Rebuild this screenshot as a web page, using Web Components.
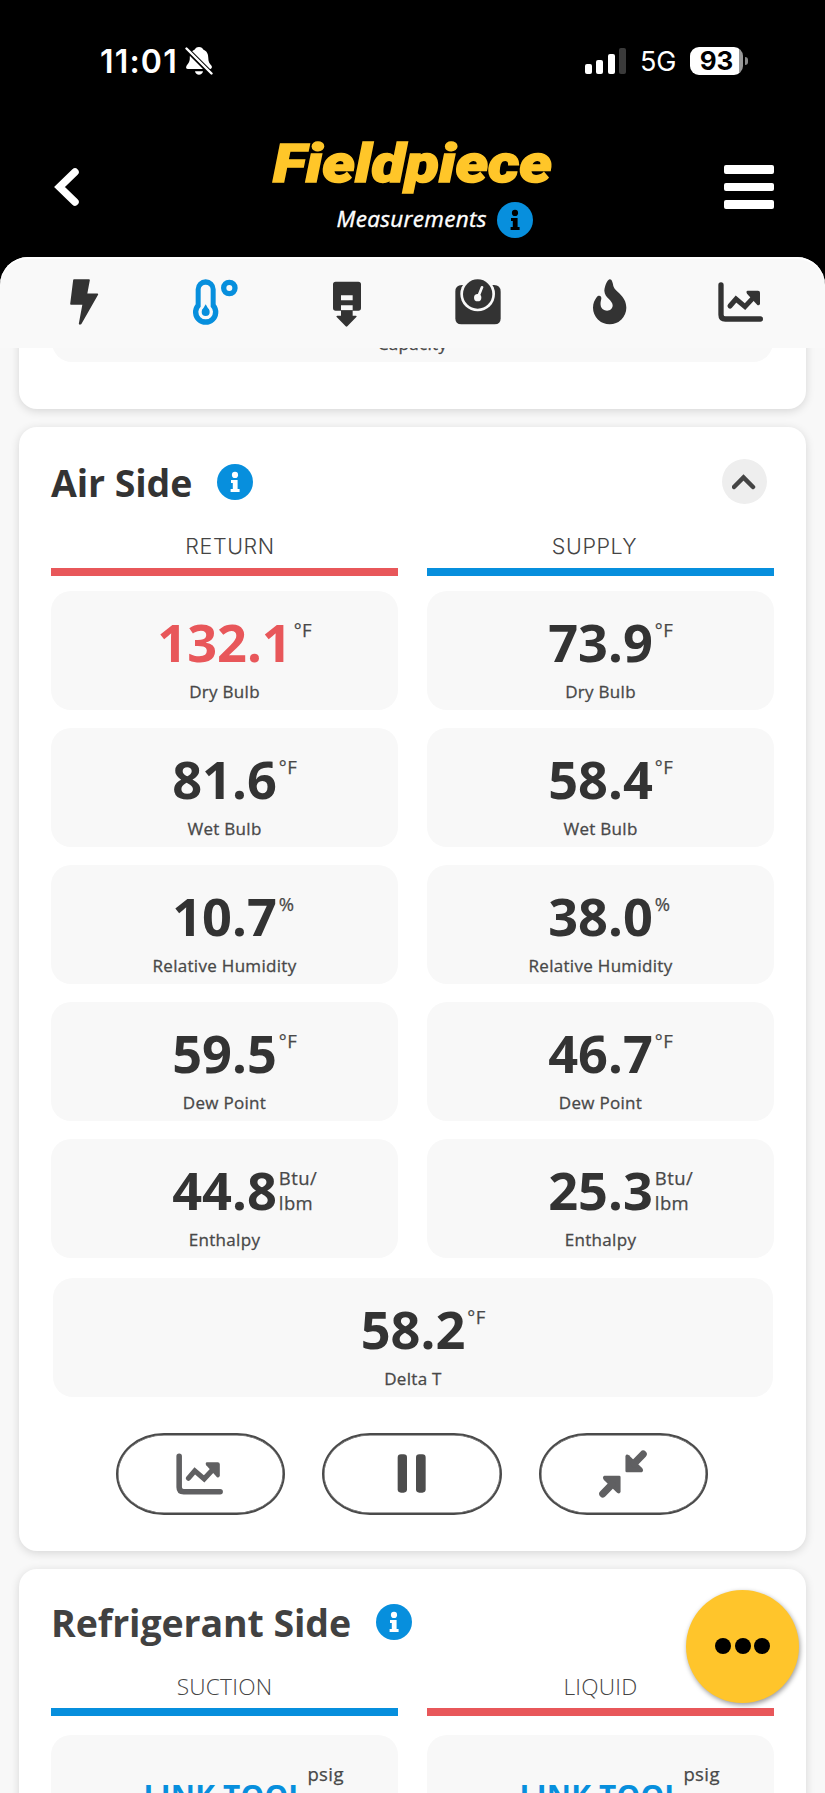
<!DOCTYPE html>
<html lang="en">
<head>
<meta charset="utf-8">
<meta name="viewport" content="width=device-width, initial-scale=1">
<title>Measurements</title>
<style>
  html, body { margin: 0; height: 100%; }
  body {
    background: #f8f8f8;
    font-family: "Open Sans", "Noto Sans", sans-serif;
    color: #333;
    overflow: hidden;
  }
</style>
</head>
<body>
<measure-app></measure-app>

<script>
  const ICONS = {
    bolt: '<path d="M42 6H87L79 49H112L62 137H59L70 78H33Z" stroke="currentColor" stroke-width="5" stroke-linejoin="round"/>',
    temp: `<path fill-rule="evenodd" d="M14 34a30 30 0 0 1 60 0V79A38 38 0 1 1 14 79ZM29 34V86A22 22 0 1 0 59 86V34a15 14 0 0 0-30 0Z"/>
      <circle cx="44" cy="102" r="12"/><path d="M34 96L44 79L54 96Z"/>
      <circle cx="115" cy="30" r="17" fill="none" stroke="currentColor" stroke-width="16"/>`,
    probe: `<path fill-rule="evenodd" d="M38 11H106Q114 11 114 19V90Q114 98 106 98H38Q30 98 30 90V19Q30 11 38 11ZM54 52V67H89V52ZM54 82V97H89V82Z"/>
      <path d="M54 97H89V113H99Q103 114 100 117L73 145Q70 147 68 145L41 117Q38 114 43 113H54Z"/>`,
    scale: `<path d="M24 21H120Q140 21 140 41V121Q140 139 122 139H22Q4 139 4 121V41Q4 21 24 21Z"/>
      <circle cx="71" cy="48" r="52" fill="#f9f9f9"/><circle cx="71" cy="48" r="44"/>
      <path d="M84 28L72 58" stroke="#f9f9f9" stroke-width="8" stroke-linecap="round"/><circle cx="71" cy="59" r="11" fill="#f9f9f9"/>`,
    fire: '<path d="M71 4C77 3 80 12 82 24C87 42 121 52 121 89A50 50 0 0 1 21 89C21 76 26 66 32 58C38 50 47 53 46 62C44 70 43 76 44 82C46 103 80 104 80 82C80 66 56 60 55 38C56 24 64 5 71 4Z"/>',
    chart: `<g fill="none" stroke="currentColor" stroke-linecap="round" stroke-linejoin="miter">
      <path stroke-width="16" d="M12 21V110Q12 123 25 123H130"/>
      <path stroke-width="15" d="M39 84L57 63L84 86L112 56"/></g>
      <path d="M92 38H123Q129 38 129 44V77Q127 84 121 81L90 47Q86 39 92 38Z"/>`,
    pause: '<rect x="29" y="13" width="28" height="115" rx="10"/><rect x="84" y="13" width="29" height="115" rx="10"/>',
    compress: `<path d="M79 20Q82 13 89 18L127 55Q133 63 126 67H83Q79 67 79 63Z"/>
      <path d="M104 42L130 15" stroke="currentColor" stroke-width="21" stroke-linecap="round"/>
      <g transform="rotate(180 72 72)"><path d="M79 20Q82 13 89 18L127 55Q133 63 126 67H83Q79 67 79 63Z"/>
      <path d="M104 42L130 15" stroke="currentColor" stroke-width="21" stroke-linecap="round"/></g>`
  };

  class AppIcon extends HTMLElement {
    constructor() {
      super();
      this.attachShadow({ mode: 'open' });
    }

    connectedCallback() {
      this.shadowRoot.innerHTML = `
        <style>
          :host { display: block; width: 48px; height: 48px; }
          svg { display: block; width: 100%; height: 100%; overflow: visible; }
        </style>
        <svg viewBox="0 0 144 144" fill="currentColor">${ICONS[this.getAttribute('name')]}</svg>
      `;
    }
  }
  customElements.define('app-icon', AppIcon);

  class InfoDot extends HTMLElement {
    constructor() {
      super();
      this.attachShadow({ mode: 'open' });
      this.shadowRoot.innerHTML = `
        <style>
          :host { display: block; width: 36px; height: 36px; color: #fff; }
          svg { display: block; }
        </style>
        <svg width="36" height="36" viewBox="0 0 36 36">
          <circle cx="18" cy="18" r="18" fill="#078fdd"/>
          <circle cx="18" cy="10.9" r="3.1" fill="currentColor"/>
          <path d="M14 16h6.6v9h2v2.9h-9V25h2.2v-6H14z" fill="currentColor"/>
        </svg>
      `;
    }
  }
  customElements.define('info-dot', InfoDot);

  class StatusBar extends HTMLElement {
    constructor() {
      super();
      this.attachShadow({ mode: 'open' });
      this.shadowRoot.innerHTML = `
        <style>
          :host {
            display: flex;
            align-items: center;
            justify-content: space-between;
            height: 122px;
            padding: 0 77px 0 100px;
            box-sizing: border-box;
            font-family: Inter, sans-serif;
            color: #fff;
          }
          .group { display: flex; align-items: center; }
          .time { font-size: 32px; font-weight: 600; letter-spacing: 1.2px; }
          .bell { margin-left: 7px; }
          .signal { display: flex; align-items: flex-end; gap: 4.3px; height: 26px; }
          .signal i { width: 7px; border-radius: 2px; background: #fff; }
          .signal i:last-child { background: #3a3a3a; }
          .net { margin-left: 14px; font-size: 27px; font-weight: 400; letter-spacing: -0.3px; }
          .battery {
            margin-left: 14px;
            width: 53px;
            height: 28px;
            line-height: 28px;
            border-radius: 9px;
            background: linear-gradient(90deg, #fff 49px, #999 49px);
            color: #000;
            text-align: center;
            font-size: 26px;
            font-weight: 700;
          }
          .nub { width: 3px; height: 8px; margin-left: 2px; border-radius: 0 3px 3px 0; background: #888; }
        </style>
        <div class="group">
          <span class="time">11:01</span>
          <svg class="bell" width="28" height="30" viewBox="0 0 28 30">
            <path fill="#fff" d="M14 1C11.5 1 10.300 2.500 9.800 3.400C6 5 4.800 8 4.800 12C4.800 16 3.300 17.500 1.700 19.500C0.500 21.500 1 23 3 23H24.500C27 23 27.500 21 26.300 19.500C24.500 17.500 23.300 16 23.300 12C23.300 8 22 5 18.200 3.400C17.500 2 16.500 1 14 1ZM10 25.200H18C17.400 29.800 10.600 29.800 10 25.200Z"/>
            <path d="M1.500 3L27 28.500" stroke="#000" stroke-width="5"/>
            <path d="M1.500 2.500L26.500 27.500" stroke="#fff" stroke-width="2.400" stroke-linecap="round"/>
          </svg>
        </div>
        <div class="group">
          <div class="signal">
            <i style="height:10px"></i><i style="height:14px"></i><i style="height:20px"></i><i style="height:26px"></i>
          </div>
          <span class="net">5G</span>
          <span class="battery">93</span>
          <span class="nub"></span>
        </div>
      `;
    }
  }
  customElements.define('status-bar', StatusBar);

  class AppHeader extends HTMLElement {
    constructor() {
      super();
      this.attachShadow({ mode: 'open' });
      this.shadowRoot.innerHTML = `
        <style>
          :host {
            display: grid;
            grid-template-columns: 1fr auto 1fr;
            height: 135px;
            padding: 0 51px 0 53px;
            color: #fff;
          }
          .back { margin-top: 44px; }
          .brand { width: 284px; }
          .logo { display: block; margin-top: 12px; overflow: visible; }
          .logo text {
            font: italic 900 53px Roboto, sans-serif;
            fill: #ffc629;
            stroke: #ffc629;
            stroke-width: 1.5px;
          }
          .sub {
            display: flex;
            align-items: center;
            gap: 10px;
            margin: 10px 0 0 65px;
            font-size: 22.500px;
            font-style: italic;
            letter-spacing: 0.33px;
            -webkit-text-stroke: 0.4px currentColor;
            line-height: 36px;
          }
          .sub span { margin-top: -2px; }
          info-dot { color: #000; }
          .menu { justify-self: end; margin-top: 43px; display: grid; gap: 9px; align-content: start; }
          .menu i { width: 50px; height: 8.7px; border-radius: 2px; background: #fff; }
        </style>
        <svg class="back" width="28" height="42" viewBox="0 0 28 42">
          <path d="M22 6L6.500 21L22 36" fill="none" stroke="#fff" stroke-width="7.500" stroke-linecap="round" stroke-linejoin="miter"/>
        </svg>
        <div class="brand">
          <svg class="logo" width="284" height="58" viewBox="0 0 284 58">
            <text x="1" y="48" textLength="279" lengthAdjust="spacingAndGlyphs">Fieldpiece</text>
          </svg>
          <div class="sub"><span>Measurements</span><info-dot></info-dot></div>
        </div>
        <div class="menu"><i></i><i></i><i></i></div>
      `;
    }
  }
  customElements.define('app-header', AppHeader);

  class TabBar extends HTMLElement {
    constructor() {
      super();
      this.attachShadow({ mode: 'open' });
      const tabs = ['bolt', 'temp', 'probe', 'scale', 'fire', 'chart'];
      this.shadowRoot.innerHTML = `
        <style>
          :host { display: block; background: #000; }
          nav {
            display: grid;
            grid-template-columns: repeat(6, 1fr);
            justify-items: center;
            height: 91px;
            padding: 21px 18px 0;
            box-sizing: border-box;
            border-radius: 28px 28px 0 0;
            background: #f9f9f9;
            box-shadow: inset 0 2px 1px #fff;
          }
          .active { color: #078fdd; }
        </style>
        <nav>${tabs.map(t => `<app-icon name="${t}" class="${t === 'temp' ? 'active' : ''}"></app-icon>`).join('')}</nav>
      `;
    }
  }
  customElements.define('tab-bar', TabBar);

  // One reading: value centred in the tile, unit hanging off its right edge
  class ReadingTile extends HTMLElement {
    constructor() {
      super();
      this.attachShadow({ mode: 'open' });
    }

    connectedCallback() {
      const unit = (this.getAttribute('unit') || '').replace('/', '/<br>');
      this.shadowRoot.innerHTML = `
        <style>
          :host {
            display: block;
            height: 119px;
            padding-top: 21px;
            box-sizing: border-box;
            border-radius: 20px;
            background: #f8f8f8;
            text-align: center;
          }
          .row { display: grid; grid-template-columns: 1fr auto 1fr; height: 60px; }
          .value {
            grid-column: 2;
            font-size: 52.3px;
            font-weight: 700;
            line-height: 60px;
            color: #333;
          }
          .unit {
            margin: 5px 0 0 2px;
            text-align: left;
            font-size: 18.500px;
            letter-spacing: 0.4px;
            line-height: 25px;
            color: #484848;
            -webkit-text-stroke: 0.25px currentColor;
          }
          .label {
            margin-top: 8px;
            font-size: 17px;
            letter-spacing: 0.3px;
            line-height: 24px;
            color: #484848;
            -webkit-text-stroke: 0.3px currentColor;
          }
          :host([alert]) .value { color: #e8575a; }
          :host([link]) .value { font-size: 29.800px; line-height: 80px; letter-spacing: 0.2px; color: #078fdd; }
          :host([link]) .unit { margin-left: 2px; }
        </style>
        <div class="row">
          <span class="value">${this.getAttribute('value') || ''}</span>
          <span class="unit">${unit}</span>
        </div>
        <div class="label"><slot></slot></div>
      `;
    }
  }
  customElements.define('reading-tile', ReadingTile);

  class ColumnHead extends HTMLElement {
    constructor() {
      super();
      this.attachShadow({ mode: 'open' });
      this.shadowRoot.innerHTML = `
        <style>
          :host {
            display: block;
            height: 36px;
            padding-top: 28px;
            border-bottom: 8px solid var(--bar, #078fdd);
            text-align: center;
            font-size: 22.700px;
            font-weight: 300;
            letter-spacing: 0.2px;
            line-height: 30px;
            color: #444;
          }
          :host([hot]) { --bar: #e8575a; }
        </style>
        <slot></slot>
      `;
    }
  }
  customElements.define('column-head', ColumnHead);

  class PillButton extends HTMLElement {
    constructor() {
      super();
      this.attachShadow({ mode: 'open' });
      this.shadowRoot.innerHTML = `
        <style>
          :host {
            display: flex;
            align-items: center;
            justify-content: center;
            width: 169px;
            height: 82px;
            box-sizing: border-box;
            border: 2px solid #4a4a4a;
            border-radius: 48px / 41px;
            box-shadow: inset 0 0 0 0.5px #4a4a4a;
            color: #606062;
          }
        </style>
        <slot></slot>
      `;
    }
  }
  customElements.define('pill-button', PillButton);

  class SideCard extends HTMLElement {
    constructor() {
      super();
      this.attachShadow({ mode: 'open' });
    }

    connectedCallback() {
      const title = this.getAttribute('heading');
      this.shadowRoot.innerHTML = `
        <style>
          :host {
            display: block;
            padding: 32px 32px 36px;
            box-sizing: border-box;
            border-radius: 18px;
            background: #fff;
            box-shadow: 0 2px 10px rgba(0, 0, 0, 0.14);
          }
          header { display: flex; align-items: center; height: 45px; padding-right: 7px; }
          h2 { margin: 2px 25px 0 0; font-size: 37.500px; font-weight: 700; letter-spacing: -0.1px; line-height: 45px; color: var(--title, #333); }
          .toggle {
            display: grid;
            place-items: center;
            width: 45px;
            height: 45px;
            margin-left: auto;
            border-radius: 50%;
            background: #eee;
          }
        </style>
        ${title ? `<header>
          <h2>${title}</h2><info-dot></info-dot>
          <div class="toggle">
            <svg width="26" height="18" viewBox="0 0 26 18">
              <path d="M2 14L11.500 4.500L21 14" fill="none" stroke="#444" stroke-width="4.500" stroke-linecap="round"/>
            </svg>
          </div>
        </header>` : ''}
        <slot></slot>
      `;
    }
  }
  customElements.define('side-card', SideCard);

  class MoreButton extends HTMLElement {
    constructor() {
      super();
      this.attachShadow({ mode: 'open' });
      this.shadowRoot.innerHTML = `
        <style>
          :host {
            position: absolute;
            right: 26px;
            bottom: 90.500px;
            display: flex;
            align-items: center;
            justify-content: center;
            gap: 3.300px;
            width: 113px;
            height: 113px;
            border-radius: 50%;
            background: #ffc52b;
            box-shadow: 1px 2px 5px rgba(0, 0, 0, 0.4);
          }
          i { width: 16px; height: 16px; border-radius: 50%; background: #000; }
        </style>
        <i></i><i></i><i></i>
      `;
    }
  }
  customElements.define('more-button', MoreButton);

  const RETURN_AIR = [
    ['132.1', '°F', 'Dry Bulb'],
    ['81.6', '°F', 'Wet Bulb'],
    ['10.7', '%', 'Relative Humidity'],
    ['59.5', '°F', 'Dew Point'],
    ['44.8', 'Btu/lbm', 'Enthalpy']
  ];
  const SUPPLY_AIR = [
    ['73.9', '°F', 'Dry Bulb'],
    ['58.4', '°F', 'Wet Bulb'],
    ['38.0', '%', 'Relative Humidity'],
    ['46.7', '°F', 'Dew Point'],
    ['25.3', 'Btu/lbm', 'Enthalpy']
  ];

  class MeasureApp extends HTMLElement {
    constructor() {
      super();
      this.attachShadow({ mode: 'open' });
    }

    tile([value, unit, label]) {
      const alert = parseFloat(value) > 100 ? 'alert' : '';
      return `<reading-tile value="${value}" unit="${unit}" ${alert}>${label}</reading-tile>`;
    }

    connectedCallback() {
      this.shadowRoot.innerHTML = `
        <style>
          :host {
            position: relative;
            display: flex;
            flex-direction: column;
            height: 1793px;
            overflow: hidden;
          }
          .top { background: #000; }
          main {
            flex: 1;
            min-height: 0;
            display: flex;
            flex-direction: column;
            gap: 18px;
            padding: 0 19px;
            overflow: hidden;
          }
          side-card { flex: none; }
          .capacity { margin-top: -121px; padding: 16px 33px 47px; }
          .cols { display: grid; grid-template-columns: 347px 347px; justify-content: space-between; }
          .col { display: flex; flex-direction: column; gap: 18px; }
          column-head { margin-bottom: -3px; }
          .air column-head { font-family: Inter, sans-serif; font-size: 21.500px; letter-spacing: 0.6px; line-height: 29px; }
          .air .col:first-child column-head { padding-left: 11px; }
          .air .col:last-child column-head { padding-right: 12px; }
          .delta { margin: 20px 1px 0 2px; }
          .actions { display: flex; justify-content: center; gap: 37px; margin: 36px 2px 0 0; }
          .actions app-icon { width: 50px; height: 50px; }
          .wide { width: 180px; color: #4d4d4d; }
          .wide app-icon { width: 48px; height: 48px; }
          .refrigerant { padding-top: 30px; --title: #414141; }
          .refrigerant column-head { margin-bottom: 1px; color: #444; }
        </style>
        <div class="top">
          <status-bar></status-bar>
          <app-header></app-header>
        </div>
        <tab-bar></tab-bar>
        <main>
          <side-card class="capacity"><reading-tile>Capacity</reading-tile></side-card>
          <side-card class="air" heading="Air Side">
            <div class="cols">
              <div class="col"><column-head hot>RETURN</column-head>${RETURN_AIR.map(this.tile).join('')}</div>
              <div class="col"><column-head>SUPPLY</column-head>${SUPPLY_AIR.map(this.tile).join('')}</div>
            </div>
            <reading-tile class="delta" value="58.2" unit="°F">Delta T</reading-tile>
            <div class="actions">
              <pill-button><app-icon name="chart"></app-icon></pill-button>
              <pill-button class="wide"><app-icon name="pause"></app-icon></pill-button>
              <pill-button><app-icon name="compress"></app-icon></pill-button>
            </div>
          </side-card>
          <side-card class="refrigerant" heading="Refrigerant Side">
            <div class="cols">
              <div class="col"><column-head>SUCTION</column-head><reading-tile link value="LINK TOOL" unit="psig"></reading-tile></div>
              <div class="col"><column-head hot>LIQUID</column-head><reading-tile link value="LINK TOOL" unit="psig"></reading-tile></div>
            </div>
          </side-card>
        </main>
        <more-button></more-button>
      `;
    }
  }
  customElements.define('measure-app', MeasureApp);
</script>
</body>
</html>
